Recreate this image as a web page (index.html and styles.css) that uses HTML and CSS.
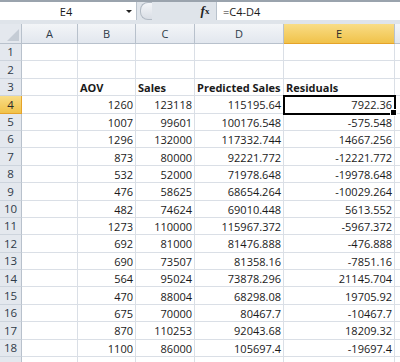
FILE: index.html
```html
<!DOCTYPE HTML>
<html>

<head>
    <meta charset="utf-8">
    <link rel="stylesheet" href="styles.css">
</head>

<body>

    <div class="formula-bar">
        <div class="name-box">
            <span class="name-text">E4</span>
            <span class="name-arrow"></span>
        </div>
        <div class="splitter"><span class="knob"></span></div>
        <div class="fx"><i>f</i><sub>x</sub></div>
        <div class="formula-input">=C4-D4</div>
    </div>

    <table class="sheet">
        <tr class="col-heads">
            <th class="corner"><span class="tri"></span></th>
            <th>A</th>
            <th>B</th>
            <th>C</th>
            <th>D</th>
            <th class="active">E</th>
            <th></th>
        </tr>
        <tr><th>1</th><td></td><td></td><td></td><td></td><td></td><td></td></tr>
        <tr><th>2</th><td></td><td></td><td></td><td></td><td></td><td></td></tr>
        <tr class="labels"><th>3</th><td></td><td>AOV</td><td>Sales</td><td>Predicted Sales</td><td>Residuals</td><td></td></tr>
        <tr><th class="active">4</th><td></td><td>1260</td><td>123118</td><td>115195.64</td><td class="selected">7922.36<span class="handle"></span></td><td></td></tr>
        <tr><th>5</th><td></td><td>1007</td><td>99601</td><td>100176.548</td><td>-575.548</td><td></td></tr>
        <tr><th>6</th><td></td><td>1296</td><td>132000</td><td>117332.744</td><td>14667.256</td><td></td></tr>
        <tr><th>7</th><td></td><td>873</td><td>80000</td><td>92221.772</td><td>-12221.772</td><td></td></tr>
        <tr><th>8</th><td></td><td>532</td><td>52000</td><td>71978.648</td><td>-19978.648</td><td></td></tr>
        <tr><th>9</th><td></td><td>476</td><td>58625</td><td>68654.264</td><td>-10029.264</td><td></td></tr>
        <tr><th>10</th><td></td><td>482</td><td>74624</td><td>69010.448</td><td>5613.552</td><td></td></tr>
        <tr><th>11</th><td></td><td>1273</td><td>110000</td><td>115967.372</td><td>-5967.372</td><td></td></tr>
        <tr><th>12</th><td></td><td>692</td><td>81000</td><td>81476.888</td><td>-476.888</td><td></td></tr>
        <tr><th>13</th><td></td><td>690</td><td>73507</td><td>81358.16</td><td>-7851.16</td><td></td></tr>
        <tr><th>14</th><td></td><td>564</td><td>95024</td><td>73878.296</td><td>21145.704</td><td></td></tr>
        <tr><th>15</th><td></td><td>470</td><td>88004</td><td>68298.08</td><td>19705.92</td><td></td></tr>
        <tr><th>16</th><td></td><td>675</td><td>70000</td><td>80467.7</td><td>-10467.7</td><td></td></tr>
        <tr><th>17</th><td></td><td>870</td><td>110253</td><td>92043.68</td><td>18209.32</td><td></td></tr>
        <tr><th>18</th><td></td><td>1100</td><td>86000</td><td>105697.4</td><td>-19697.4</td><td></td></tr>
        <tr><th></th><td></td><td></td><td></td><td></td><td></td><td></td></tr>
    </table>

</body>

</html>
```

FILE: styles.css
```css
/* общий вид листа */

body {
    margin: 0;
    width: 400px;
    height: 362px;
    overflow: hidden;
    background: #fff;
    font-family: "Open Sans", "Liberation Sans", sans-serif;
    font-size: 11px;
    color: #1a1a1a;
}

/* строка формул */

.formula-bar {
    display: flex;
    height: 18px;
    border-top: 2px solid #9aa3ad;
    border-bottom: 4px solid #dfe4ea;
    background: #dfe4ea;
}

.name-box {
    width: 137px;
    background: #fff;
    border-right: 1px solid #b9c2cc;
    display: flex;
    align-items: center;
    box-sizing: border-box;
}

.name-text {
    flex: 1;
    text-align: center;
    padding-left: 6px;
}

.name-arrow {
    width: 0;
    height: 0;
    margin-right: 4px;
    border-left: 3px solid transparent;
    border-right: 3px solid transparent;
    border-top: 3px solid #222;
}

.splitter {
    width: 54px;
    display: flex;
    align-items: center;
    padding-left: 3px;
}

.knob {
    width: 11px;
    height: 16px;
    border-radius: 8px 0 0 8px;
    border: 1px solid #b2bac4;
    border-right: none;
    background: linear-gradient(#f4f6f9, #d9dee5);
}

.fx {
    width: 22px;
    display: flex;
    align-items: center;
    justify-content: center;
    font-family: "Liberation Serif", serif;
    font-weight: bold;
    font-size: 13px;
    color: #222;
}

.fx sub {
    font-size: 9px;
    vertical-align: -1px;
}

.formula-input {
    flex: 1;
    background: #fff;
    border-left: 1px solid #b9c2cc;
    display: flex;
    align-items: center;
    padding-left: 6px;
}

/* сетка листа */

.sheet {
    display: grid;
    grid-template-columns: 22px 56px 58px 59px 89px 111px 25px;
    grid-template-rows: 20px;
    grid-auto-rows: 17.4px;
    border-spacing: 0;
}

.sheet tbody,
.sheet tr {
    display: contents;
}

td,
th {
    box-sizing: border-box;
    display: flex;
    align-items: center;
    padding: 0;
    white-space: nowrap;
    line-height: 1;
}

td {
    justify-content: flex-end;
    padding: 1px 2px 0 0;
    border-right: 1px solid #dadfe6;
    border-bottom: 1px solid #dadfe6;
    position: relative;
}

th {
    justify-content: center;
    font-weight: normal;
    color: #2f3a48;
    background: linear-gradient(#f3f5f8, #e2e7ee);
    border-right: 1px solid #b8c1cc;
    border-bottom: 1px solid #b8c1cc;
}

tr > th:first-child {
    background: #e4e8ee;
    font-size: 11.5px;
    border-bottom-color: #cdd4dd;
}

.col-heads th.corner {
    position: relative;
    border-bottom-color: #b8c1cc;
}

.tri {
    position: absolute;
    right: 2px;
    bottom: 2px;
    width: 0;
    height: 0;
    border-left: 12px solid transparent;
    border-bottom: 12px solid #c5ccd5;
}

th.active,
tr > th.active:first-child {
    background: linear-gradient(#f9dd86, #f0c24a);
    border-bottom-color: #e5a32a;
    color: #2a2a2a;
}

tr > th.active:first-child {
    border-right-color: #e5a32a;
}

.labels td {
    font-weight: bold;
    justify-content: flex-start;
    padding-left: 2px;
}

td.selected {
    outline: 2px solid #000;
    outline-offset: -1px;
    z-index: 1;
}

.handle {
    position: absolute;
    right: -3px;
    bottom: -3px;
    width: 5px;
    height: 5px;
    background: #000;
    border: 1px solid #fff;
}
```
